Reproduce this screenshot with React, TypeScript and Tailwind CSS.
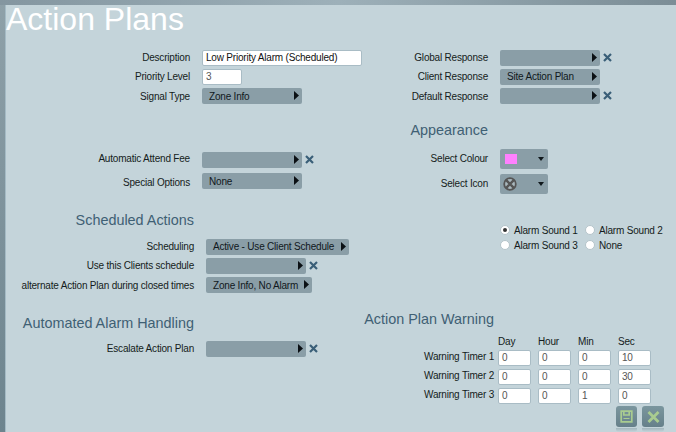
import type { ReactNode } from 'react';

const FONT = "font-['Liberation_Sans',Arial,sans-serif]";

function ArrowRight() {
  return (
    <svg width="5" height="9" viewBox="0 0 5 9" className="shrink-0">
      <path d="M0 0 L5 4.5 L0 9 Z" fill="#0b1014" />
    </svg>
  );
}

function ClearX() {
  return (
    <svg width="9" height="9" viewBox="0 0 9 9" className="ml-[1px] shrink-0">
      <path d="M1 1 L8 8 M8 1 L1 8" stroke="#3a5f78" strokeWidth="2.2" />
    </svg>
  );
}

function Picker({ text, width, clear, textClass = '' }: { text?: string; width: string; clear?: boolean; textClass?: string }) {
  return (
    <div className="flex items-center gap-[2px]">
      <div
        className={`flex h-[16px] items-center justify-between rounded-[2px] bg-[#8a9ea7] pl-[7px] pr-[3px] text-[#10181c] ${width}`}
      >
        <span className={`whitespace-nowrap ${textClass}`}>{text}</span>
        <ArrowRight />
      </div>
      {clear && <ClearX />}
    </div>
  );
}

function Field({ label, labelW, children, h, labelClass = '' }: { label: string; labelW: string; children: ReactNode; h: string; labelClass?: string }) {
  return (
    <div className={`flex items-center gap-[12px] ${h}`}>
      <div className={`whitespace-nowrap text-right text-[#141c20] ${labelW} ${labelClass}`}>{label}</div>
      {children}
    </div>
  );
}

function TextBox({ value, width, dark }: { value: string; width: string; dark?: boolean }) {
  return (
    <div
      className={`flex h-[16px] items-center rounded-[2px] border border-[#a9bcc5] bg-white px-[3px] ${width} ${dark ? 'text-[#111]' : 'text-[#555]'}`}
    >
      {value}
    </div>
  );
}

function Heading({ children, className }: { children: string; className: string }) {
  return <div className={`whitespace-nowrap text-right text-[14.4px] leading-[17px] tracking-normal text-[#3f6074] ${className}`}>{children}</div>;
}

function Swatch({ children }: { children: ReactNode }) {
  return (
    <div className="flex h-[20px] w-[48px] items-center justify-between rounded-[2px] bg-[#8a9ea7] pl-[3px] pr-[4px]">
      {children}
      <svg width="6" height="4" viewBox="0 0 6 4">
        <path d="M0 0 H6 L3 4 Z" fill="#10181c" />
      </svg>
    </div>
  );
}

function Radio({ label, checked, width }: { label: string; checked?: boolean; width: string }) {
  return (
    <div className={`flex items-center gap-[4px] ${width}`}>
      <div className="flex h-[10px] w-[10px] items-center justify-center rounded-full border border-[#b5c4ca] bg-white">
        {checked && <div className="h-[4px] w-[4px] rounded-full bg-[#333]" />}
      </div>
      <span className="whitespace-nowrap text-[#141c20]">{label}</span>
    </div>
  );
}

function TimerRow({ label, values }: { label: string; values: string[] }) {
  return (
    <div className="flex h-[19px] items-center">
      <div className="w-[130px] whitespace-nowrap pb-[2px] text-right text-[#141c20]">{label}</div>
      <div className="ml-[4px] flex gap-[7px]">
        {values.map((v, i) => (
          <TextBox key={i} value={v} width="w-[33px]" />
        ))}
      </div>
    </div>
  );
}

function ActionButton({ children, width }: { children: ReactNode; width: string }) {
  return (
    <div className={width}>
      <div className="flex h-[21px] items-center justify-center rounded-[3px] bg-gradient-to-b from-[#7b969e] to-[#66808a]">
        {children}
      </div>
      <div className="mt-[1px] h-[4px] rounded-b-[3px] bg-gradient-to-b from-[#a3b6bd] to-[#c4d4da]" />
    </div>
  );
}

export default function App() {
  return (
    <div className={`h-[432px] w-[676px] overflow-hidden bg-gradient-to-b from-[#8fa1a9] to-[#6d848e] text-[10px] tracking-[-0.2px] ${FONT}`}>
      <div className="h-[5px] bg-gradient-to-r from-[#8496a0] via-[#9db0b9] to-[#7b8d96]" />
      <div className="ml-[5px] h-[427px] border-l border-[#a5bbc5] bg-[#c4d4da]">
        <h1 className="h-[43px] text-[32px] leading-[29px] tracking-normal text-white">Action Plans</h1>

        <div className="flex">
          {/* left column */}
          <div className="w-[358px]">
            <Field label="Description" labelW="w-[184px]" h="h-[19px]">
              <TextBox value="Low Priority Alarm (Scheduled)" width="w-[160px]" dark />
            </Field>
            <Field label="Priority Level" labelW="w-[184px]" h="h-[19px]">
              <TextBox value="3" width="w-[40px]" />
            </Field>
            <Field label="Signal Type" labelW="w-[184px]" h="h-[19px]" labelClass="pt-[1px]">
              <Picker text="Zone Info" width="w-[100px]" textClass="pt-[1px]" />
            </Field>

            <div className="mt-[44px]">
              <Field label="Automatic Attend Fee" labelW="w-[184px]" h="h-[21px]" labelClass="pb-[3px]">
                <Picker width="w-[100px]" clear />
              </Field>
              <Field label="Special Options" labelW="w-[184px]" h="h-[21px]" labelClass="pt-[4px]">
                <Picker text="None" width="w-[100px]" textClass="pt-[1px]" />
              </Field>
            </div>

            <Heading className="mt-[21px] w-[188px]">Scheduled Actions</Heading>
            <div className="mt-[8px]">
              <Field label="Scheduling" labelW="w-[188px]" h="h-[19px]">
                <Picker text="Active - Use Client Schedule" width="w-[143px]" />
              </Field>
              <Field label="Use this Clients schedule" labelW="w-[188px]" h="h-[19px]">
                <Picker width="w-[100px]" clear />
              </Field>
              <Field label="alternate Action Plan during closed times" labelW="w-[188px]" h="h-[19px]" labelClass="pt-[1px]">
                <Picker text="Zone Info, No Alarm" width="w-[106px]" textClass="pt-[1px]" />
              </Field>
            </div>

            <Heading className="mt-[21px] w-[188px]">Automated Alarm Handling</Heading>
            <div className="mt-[7px]">
              <Field label="Escalate Action Plan" labelW="w-[188px]" h="h-[19px]">
                <Picker width="w-[100px]" clear />
              </Field>
            </div>
          </div>

          {/* right column */}
          <div className="flex-1">
            <Field label="Global Response" labelW="w-[124px]" h="h-[19px]">
              <Picker width="w-[100px]" clear />
            </Field>
            <Field label="Client Response" labelW="w-[124px]" h="h-[19px]">
              <Picker text="Site Action Plan" width="w-[100px]" />
            </Field>
            <Field label="Default Response" labelW="w-[124px]" h="h-[19px]" labelClass="pt-[1px]">
              <Picker width="w-[100px]" clear />
            </Field>

            <Heading className="mt-[17px] w-[124px]">Appearance</Heading>
            <div className="mt-[10px] flex flex-col gap-[5px]">
              <Field label="Select Colour" labelW="w-[124px]" h="h-[20px]" labelClass="pb-[2px]">
                <Swatch>
                  <div className="ml-[2px] h-[10px] w-[12px] bg-[#ff80ff]" />
                </Swatch>
              </Field>
              <Field label="Select Icon" labelW="w-[124px]" h="h-[20px]" labelClass="pb-[2px]">
                <Swatch>
                  <svg width="14" height="14" viewBox="0 0 14 14">
                    <circle cx="7" cy="7" r="5.8" fill="#a9b8be" stroke="#555" strokeWidth="1.8" />
                    <path d="M3.2 3.2 L10.8 10.8 M10.8 3.2 L3.2 10.8" stroke="#555" strokeWidth="2.4" />
                  </svg>
                </Swatch>
              </Field>
            </div>

            <div className="ml-[136px] mt-[31px] flex flex-col gap-[5px]">
              <div className="flex h-[10px] items-center">
                <Radio label="Alarm Sound 1" checked width="w-[85px]" />
                <Radio label="Alarm Sound 2" width="w-[85px]" />
              </div>
              <div className="flex h-[10px] items-center">
                <Radio label="Alarm Sound 3" width="w-[85px]" />
                <Radio label="None" width="w-[85px]" />
              </div>
            </div>

            <Heading className="mt-[61px] w-[130px]">Action Plan Warning</Heading>
            <div className="ml-[134px] mt-[6px] flex h-[14px] items-center text-[#141c20]">
              <span className="w-[40px]">Day</span>
              <span className="w-[40px]">Hour</span>
              <span className="w-[40px]">Min</span>
              <span className="w-[40px]">Sec</span>
            </div>
            <TimerRow label="Warning Timer 1" values={['0', '0', '0', '10']} />
            <TimerRow label="Warning Timer 2" values={['0', '0', '0', '30']} />
            <TimerRow label="Warning Timer 3" values={['0', '0', '1', '0']} />
            <div className="ml-[252px] mt-[1px] flex gap-[5px]">
              <ActionButton width="w-[21px]">
                <svg width="13" height="13" viewBox="0 0 13 13" fill="none" stroke="#a9cc90" strokeWidth="1.7">
                  <path d="M1.2 1.2 H11.8 V11.8 H1.2 Z M3.8 1.2 V5 H9.2 V1.2" />
                  <path d="M3.5 8.5 H9.5" strokeWidth="1" />
                </svg>
              </ActionButton>
              <ActionButton width="w-[22px]">
                <svg width="13" height="12" viewBox="0 0 13 12" fill="none" stroke="#a9cc90" strokeWidth="2.8">
                  <path d="M1.5 1 L11.5 11 M11.5 1 L1.5 11" />
                </svg>
              </ActionButton>
            </div>
          </div>
        </div>
      </div>
    </div>
  );
}
